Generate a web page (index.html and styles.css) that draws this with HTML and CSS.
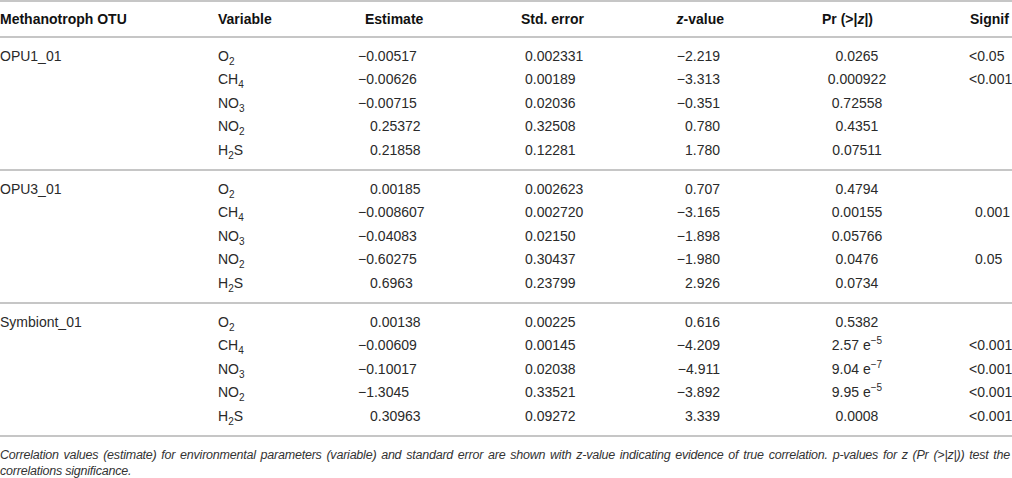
FILE: index.html
```html
<!DOCTYPE html>
<html lang="en">
<head>
<meta charset="utf-8">
<title>Methanotroph OTU correlations</title>
<link rel="stylesheet" href="styles.css">
</head>
<body>
<div class="page">
<table class="tbl">
  <colgroup>
    <col class="c-otu"><col class="c-var"><col class="c-est"><col class="c-se"><col class="c-z"><col class="c-pr"><col class="c-sig">
  </colgroup>
  <thead>
    <tr>
      <th class="otu">Methanotroph OTU</th>
      <th class="var">Variable</th>
      <th class="est">Estimate</th>
      <th class="se">Std. error</th>
      <th class="z"><i>z</i>-value</th>
      <th class="pr">Pr (&gt;|<i>z</i>|)</th>
      <th class="sig">Signif</th>
    </tr>
  </thead>
  <tbody>
    <tr class="first"><td class="otu">OPU1_01</td><td class="var">O<sub>2</sub></td><td class="est">−0.00517</td><td class="se">0.002331</td><td class="z">−2.219</td><td class="pr">0.0265</td><td class="sig">&lt;0.05</td></tr>
    <tr><td class="otu"></td><td class="var">CH<sub>4</sub></td><td class="est">−0.00626</td><td class="se">0.00189</td><td class="z">−3.313</td><td class="pr">0.000922</td><td class="sig">&lt;0.001</td></tr>
    <tr><td class="otu"></td><td class="var">NO<sub>3</sub></td><td class="est">−0.00715</td><td class="se">0.02036</td><td class="z">−0.351</td><td class="pr">0.72558</td><td class="sig"></td></tr>
    <tr><td class="otu"></td><td class="var">NO<sub>2</sub></td><td class="est pos">0.25372</td><td class="se">0.32508</td><td class="z">0.780</td><td class="pr">0.4351</td><td class="sig"></td></tr>
    <tr class="last"><td class="otu"></td><td class="var">H<sub>2</sub>S</td><td class="est pos">0.21858</td><td class="se">0.12281</td><td class="z">1.780</td><td class="pr">0.07511</td><td class="sig"></td></tr>
  </tbody>
  <tbody>
    <tr class="first"><td class="otu">OPU3_01</td><td class="var">O<sub>2</sub></td><td class="est pos">0.00185</td><td class="se">0.002623</td><td class="z">0.707</td><td class="pr">0.4794</td><td class="sig"></td></tr>
    <tr><td class="otu"></td><td class="var">CH<sub>4</sub></td><td class="est">−0.008607</td><td class="se">0.002720</td><td class="z">−3.165</td><td class="pr">0.00155</td><td class="sig pos">0.001</td></tr>
    <tr><td class="otu"></td><td class="var">NO<sub>3</sub></td><td class="est">−0.04083</td><td class="se">0.02150</td><td class="z">−1.898</td><td class="pr">0.05766</td><td class="sig"></td></tr>
    <tr><td class="otu"></td><td class="var">NO<sub>2</sub></td><td class="est">−0.60275</td><td class="se">0.30437</td><td class="z">−1.980</td><td class="pr">0.0476</td><td class="sig pos">0.05</td></tr>
    <tr class="last"><td class="otu"></td><td class="var">H<sub>2</sub>S</td><td class="est pos">0.6963</td><td class="se">0.23799</td><td class="z">2.926</td><td class="pr">0.0734</td><td class="sig"></td></tr>
  </tbody>
  <tbody>
    <tr class="first"><td class="otu">Symbiont_01</td><td class="var">O<sub>2</sub></td><td class="est pos">0.00138</td><td class="se">0.00225</td><td class="z">0.616</td><td class="pr">0.5382</td><td class="sig"></td></tr>
    <tr><td class="otu"></td><td class="var">CH<sub>4</sub></td><td class="est">−0.00609</td><td class="se">0.00145</td><td class="z">−4.209</td><td class="pr">2.57 e<sup>−5</sup></td><td class="sig">&lt;0.001</td></tr>
    <tr><td class="otu"></td><td class="var">NO<sub>3</sub></td><td class="est">−0.10017</td><td class="se">0.02038</td><td class="z">−4.911</td><td class="pr">9.04 e<sup>−7</sup></td><td class="sig">&lt;0.001</td></tr>
    <tr><td class="otu"></td><td class="var">NO<sub>2</sub></td><td class="est">−1.3045</td><td class="se">0.33521</td><td class="z">−3.892</td><td class="pr">9.95 e<sup>−5</sup></td><td class="sig">&lt;0.001</td></tr>
    <tr class="last"><td class="otu"></td><td class="var">H<sub>2</sub>S</td><td class="est pos">0.30963</td><td class="se">0.09272</td><td class="z">3.339</td><td class="pr">0.0008</td><td class="sig">&lt;0.001</td></tr>
  </tbody>
</table>
<p class="caption">Correlation values (estimate) for environmental parameters (variable) and standard error are shown with z-value indicating evidence of true correlation. p-values for z (Pr (&gt;|z|)) test the correlations significance.</p>
</div>
</body>
</html>
```
FILE: styles.css
```css
html, body {
  margin: 0;
  padding: 0;
  background: #ffffff;
}
body {
  overflow: hidden;
  font-family: "Liberation Sans", Arial, Helvetica, sans-serif;
  color: #2a2a2a;
}
.page {
  width: 1030px;
}
.tbl {
  width: 1030px;
  table-layout: fixed;
  border-collapse: separate;
  border-spacing: 0;
  font-size: 14px;
}
.c-otu { width: 218px; }
.c-var { width: 112px; }
.c-est { width: 170px; }
.c-se  { width: 150px; }
.c-z   { width: 90px; }
.c-pr  { width: 224px; }
.c-sig { width: 66px; }

th {
  font-weight: bold;
  color: #111;
  line-height: 18px;
  padding: 8px 0;
  border-top: 2px solid #c6c6c6;
  border-bottom: 2px solid #c6c6c6;
  text-align: left;
  white-space: nowrap;
}
th i { font-style: italic; }
td {
  line-height: 23.5px;
  padding: 0;
  text-align: left;
  white-space: nowrap;
  vertical-align: middle;
}
tr.first td { padding-top: 6.5px; }
tr.last td { padding-bottom: 7px; border-bottom: 2px solid #c6c6c6; }

th.otu { padding-left: 0; }
th.var, td.var { padding-left: 0; }
th.est { padding-left: 35px; }
td.est { padding-left: 28px; }
td.est.pos { padding-left: 40px; }
th.se { padding-left: 21px; }
td.se { padding-left: 25px; }
th.z { text-align: right; padding-right: 16px; }
td.z { text-align: right; padding-right: 20px; }
th.pr { padding-left: 82px; }
td.pr { text-align: center; padding-left: 10px; }
th.sig { padding-left: 6px; }
td.sig { padding-left: 5px; }
td.sig.pos { padding-left: 11px; }

sub, sup {
  font-size: 10px;
  line-height: 0;
  vertical-align: baseline;
  position: relative;
}
sub { top: 4px; }
sup { top: -6px; }

.caption {
  width: 1010px;
  margin: 10px 0 0;
  font-style: italic;
  font-size: 12.5px;
  line-height: 16px;
  letter-spacing: -0.22px;
  color: #333;
  text-align: justify;
  font-family: "Liberation Sans", Arial, sans-serif;
}
```
